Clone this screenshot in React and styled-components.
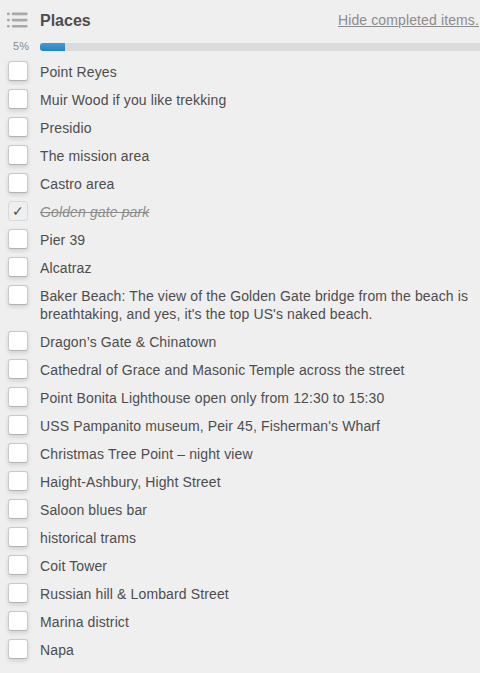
import React from "react";
import styled, { createGlobalStyle, css } from "styled-components";

const GlobalStyle = createGlobalStyle`
  * { box-sizing: border-box; }
  body {
    margin: 0;
    background: #efefef;
    color: #4d4d4d;
    font: 14px/18px "Liberation Sans", Arial, sans-serif;
    overflow: hidden;
  }
`;

const Checklist = styled.section`
  width: 480px;
  height: 673px;
  overflow: hidden;
  background: #efefef;
`;

const Header = styled.header`
  display: flex;
  align-items: center;
  height: 40px;
  padding: 0 1px 0 7px;
`;

const ListIcon = styled.svg`
  flex: none;
  width: 21px;
  height: 16px;
  margin-right: 12px;
  fill: #a9a9a9;
`;

const Title = styled.h3`
  flex: 1;
  margin: 0;
  padding-top: 2px;
  font-size: 16px;
  line-height: 20px;
  font-weight: bold;
`;

const HideLink = styled.a`
  color: #8c8c8c;
  letter-spacing: 0.12px;
  text-decoration: underline;
  white-space: nowrap;
`;

const Progress = styled.div`
  display: flex;
  align-items: center;
  height: 18px;
  padding-bottom: 4px;
`;

const Percentage = styled.span`
  width: 40px;
  padding-left: 13px;
  color: #8c8c8c;
  font-size: 11px;
  line-height: 12px;
  transform: translateY(-1px);
`;

const Track = styled.div`
  flex: 1;
  height: 8px;
  overflow: hidden;
  border-radius: 3px 0 0 3px;
  background: #dbdbdb;
`;

const Fill = styled.div`
  height: 8px;
  background: linear-gradient(to bottom, #459bce, #2384c4);
`;

const Items = styled.ul`
  margin: 0;
  padding: 0;
  list-style: none;
`;

const Item = styled.li`
  display: flex;
  align-items: flex-start;
  padding: 3px 8px 5px;
`;

const Checkbox = styled.span`
  flex: none;
  display: flex;
  align-items: center;
  justify-content: center;
  width: 20px;
  height: 20px;
  margin-right: 12px;
  border: 1px solid #c9c9c9;
  border-bottom-color: #b3b3b3;
  border-radius: 3px;
  background: #fff;
  box-shadow: 0 2px 4px rgba(0, 0, 0, 0.13);
  ${({ $done }) => $done && css`
    border-color: #d9d9d9;
    background: #efefef;
    box-shadow: none;
  `}
`;

const Label = styled.span`
  flex: 1;
  padding-top: 2px;
  letter-spacing: 0.125px;
  ${({ $done }) => $done && css`
    color: #8c8c8c;
    font-style: italic;
    text-decoration: line-through;
  `}
`;

const places = [
  "Point Reyes",
  "Muir Wood if you like trekking",
  "Presidio",
  "The mission area",
  "Castro area",
  "Golden gate park",
  "Pier 39",
  "Alcatraz",
  "Baker Beach: The view of the Golden Gate bridge from the beach is breathtaking, and yes, it's the top US's naked beach.",
  "Dragon’s Gate & Chinatown",
  "Cathedral of Grace and Masonic Temple across the street",
  "Point Bonita Lighthouse open only from 12:30 to 15:30",
  "USS Pampanito museum, Peir 45, Fisherman's Wharf",
  "Christmas Tree Point – night view",
  "Haight-Ashbury, Hight Street",
  "Saloon blues bar",
  "historical trams",
  "Coit Tower",
  "Russian hill & Lombard Street",
  "Marina district",
  "Napa",
];

const completed = new Set(["Golden gate park"]);

export default function App() {
  const percent = Math.round((completed.size / places.length) * 100);
  return (
    <>
      <GlobalStyle />
      <Checklist>
        <Header>
          <ListIcon viewBox="0 0 21 16" aria-hidden="true">
            {[0.6, 6.8, 13].map((y) => (
              <g key={y}>
                <rect x="0" y={y} width="2.7" height="2.6" rx="0.8" />
                <rect x="4.8" y={y} width="15.7" height="2.6" rx="0.8" />
              </g>
            ))}
          </ListIcon>
          <Title>Places</Title>
          <HideLink>Hide completed items.</HideLink>
        </Header>
        <Progress>
          <Percentage>{percent}%</Percentage>
          <Track>
            <Fill style={{ width: `${percent * 5}px` }} />
          </Track>
        </Progress>
        <Items>
          {places.map((place) => {
            const done = completed.has(place);
            return (
              <Item key={place}>
                <Checkbox $done={done}>{done && "✓"}</Checkbox>
                <Label $done={done}>{place}</Label>
              </Item>
            );
          })}
        </Items>
      </Checklist>
    </>
  );
}
